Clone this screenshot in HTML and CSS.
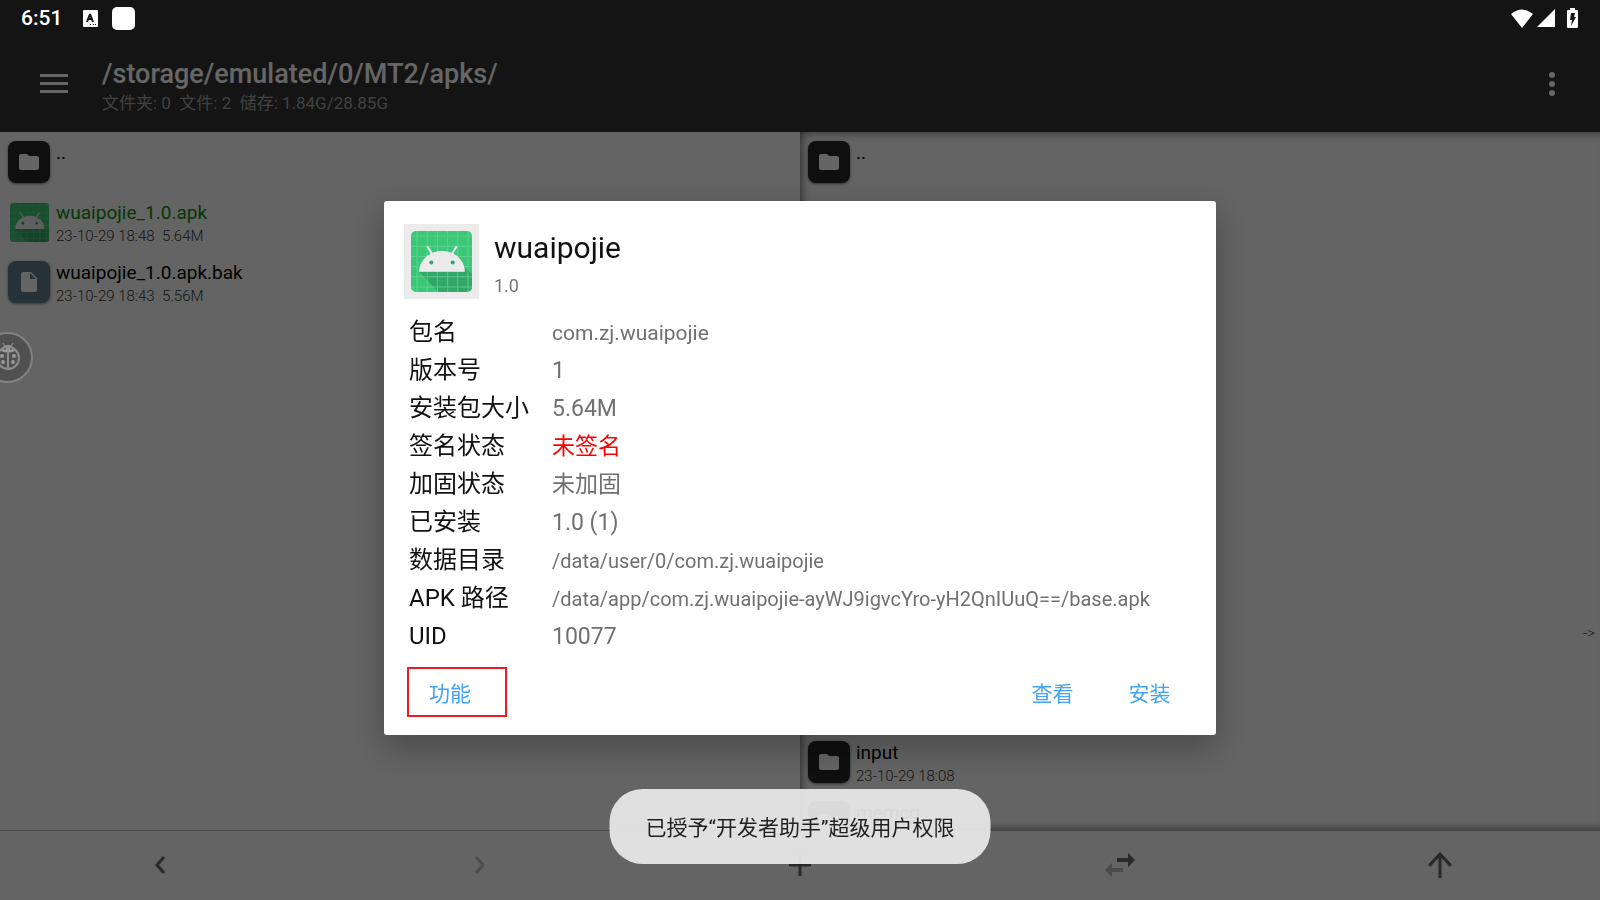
FILE: index.html
```html
<!DOCTYPE html>
<html lang="zh-CN">
<head>
  <meta charset="UTF-8">
  <meta name="viewport" content="width=device-width, initial-scale=1">
  <title>/storage/emulated/0/MT2/apks/</title>
  <link rel="stylesheet" href="styles.css">
</head>
<body>

  <!-- shared icons -->
  <svg class="sprite" aria-hidden="true">
    <symbol id="folder" viewBox="0 0 20 16">
      <path d="M2 0h6l2 2h8a2 2 0 0 1 2 2v10a2 2 0 0 1-2 2H2a2 2 0 0 1-2-2V2a2 2 0 0 1 2-2z"/>
    </symbol>
    <symbol id="file" viewBox="0 0 16 20">
      <path fill-rule="evenodd" d="M2 0h8l6 6v12a2 2 0 0 1-2 2H2a2 2 0 0 1-2-2V2a2 2 0 0 1 2-2zM9 1v6h6z"/>
    </symbol>
    <symbol id="android" viewBox="0 0 60 60">
      <rect width="60" height="60" rx="5" fill="#3ac777"/>
      <path d="M8 40h44l1-4 7 6v13a5 5 0 0 1-5 5H27z" fill="#32a868"/>
      <path d="M6 0v60M16 0v60M26 0v60M36 0v60M46 0v60M56 0v60M0 5h60M0 15h60M0 25h60M0 35h60M0 45h60M0 55h60" stroke="#75da9f" stroke-width="1" opacity=".6"/>
      <path d="M8 40a22 20 0 0 1 45 0z" fill="#ebebeb"/>
      <path d="M16 15l5 8M45 15l-5 8" stroke="#ebebeb" stroke-width="2"/>
      <circle cx="20" cy="31" r="2" fill="#32a868"/>
      <circle cx="41" cy="31" r="2" fill="#32a868"/>
    </symbol>
  </svg>

  <header class="status-bar">
    <span class="clock">6:51</span>
    <svg class="status-input" width="15" height="17" viewBox="0 0 15 17">
      <rect width="15" height="17" rx="1" fill="#fff"/>
      <path d="M4 12L7 4l3 8M5 9h4" fill="none" stroke="#141414" stroke-width="2" stroke-linejoin="bevel"/>
      <path d="M7 14h1v1H7zM10 14h1v1h-1zM12 14h1v1h-1z" fill="#141414"/>
    </svg>
    <span class="status-app"></span>
    <div class="status-right">
      <svg width="22" height="19" viewBox="0 0 22 19" fill="#fff"><path d="M11 19L0 5Q11-4 22 5z"/></svg>
      <svg class="signal" width="18" height="18" viewBox="0 0 18 18" fill="#fff"><path d="M18 0v18H0z"/></svg>
      <svg width="11" height="20" viewBox="0 0 11 20">
        <path d="M3 0h5v2h2a1 1 0 0 1 1 1v16a1 1 0 0 1-1 1H1a1 1 0 0 1-1-1V3a1 1 0 0 1 1-1h2z" fill="#fff"/>
        <path d="M4 5h4L7 9h2l-5 9 1-6H3z" fill="#141414"/>
      </svg>
    </div>
  </header>

  <div class="toolbar">
    <button class="icon-btn" aria-label="菜单">
      <svg width="28" height="20" viewBox="0 0 28 20"><path d="M0 0h28v3H0zM0 8h28v3H0zM0 16h28v3H0z"/></svg>
    </button>
    <div class="path">
      <h1>/storage/emulated/0/MT2/apks/</h1>
      <p>文件夹: 0&nbsp; 文件: 2&nbsp; 储存: 1.84G/28.85G</p>
    </div>
    <button class="icon-btn" aria-label="更多">
      <svg width="6" height="24" viewBox="0 0 6 24"><circle cx="3" cy="3" r="3"/><circle cx="3" cy="12" r="3"/><circle cx="3" cy="21" r="3"/></svg>
    </button>
  </div>

  <main class="panes">
    <section class="pane">
      <div class="row">
        <span class="tile"><svg width="20" height="16"><use href="#folder"/></svg></span>
        <div class="name">..</div>
      </div>
      <div class="row">
        <span class="tile tile-apk"><svg width="39" height="39"><use href="#android"/></svg></span>
        <div>
          <div class="name installed">wuaipojie_1.0.apk</div>
          <div class="meta">23-10-29 18:48&nbsp; 5.64M</div>
        </div>
      </div>
      <div class="row">
        <span class="tile tile-file"><svg width="16" height="20"><use href="#file"/></svg></span>
        <div>
          <div class="name">wuaipojie_1.0.apk.bak</div>
          <div class="meta">23-10-29 18:43&nbsp; 5.56M</div>
        </div>
      </div>
    </section>

    <section class="pane pane-right">
      <div class="row">
        <span class="tile"><svg width="20" height="16"><use href="#folder"/></svg></span>
        <div class="name">..</div>
      </div>
      <div class="row row-link">
        <span class="meta">-&gt;</span>
      </div>
      <div class="row row-input">
        <span class="tile"><svg width="20" height="16"><use href="#folder"/></svg></span>
        <div>
          <div class="name">input</div>
          <div class="meta">23-10-29 18:08</div>
        </div>
      </div>
      <div class="row row-memcg">
        <span class="tile"><svg width="20" height="16"><use href="#folder"/></svg></span>
        <div class="name">memcg</div>
      </div>
    </section>
  </main>

  <nav class="bottom-bar">
    <button aria-label="后退">
      <svg width="12" height="20" viewBox="0 0 12 20"><path d="M10 2L3 10l7 8" fill="none" stroke="#666" stroke-width="3"/></svg>
    </button>
    <button aria-label="前进" disabled>
      <svg width="12" height="20" viewBox="0 0 12 20"><path d="M2 2l7 8-7 8" fill="none" stroke="#bbb" stroke-width="3"/></svg>
    </button>
    <button aria-label="新建">
      <svg width="22" height="22" viewBox="0 0 22 22"><path d="M11 0v22M0 11h22" stroke="#666" stroke-width="3"/></svg>
    </button>
    <button aria-label="同步">
      <svg width="30" height="24" viewBox="0 0 30 24">
        <path d="M12 5h11V0l7 7-7 7V9H12z" fill="#666"/>
        <path d="M18 15H7v-5l-7 7 7 7v-5h11z" fill="#bbb"/>
      </svg>
    </button>
    <button aria-label="上级">
      <svg width="24" height="26" viewBox="0 0 24 26"><path d="M12 26V2M1 14L12 2l11 12" fill="none" stroke="#666" stroke-width="3"/></svg>
    </button>
  </nav>

  <div class="scrim">
    <div class="dialog" role="dialog" aria-labelledby="app-name">
      <div class="app-head">
        <span class="app-icon"><svg width="61" height="61"><use href="#android"/></svg></span>
        <div>
          <h2 id="app-name">wuaipojie</h2>
          <p>1.0</p>
        </div>
      </div>

      <table class="info">
        <tr><th>包名</th><td class="mid">com.zj.wuaipojie</td></tr>
        <tr><th>版本号</th><td>1</td></tr>
        <tr><th>安装包大小</th><td>5.64M</td></tr>
        <tr><th>签名状态</th><td class="warn">未签名</td></tr>
        <tr><th>加固状态</th><td>未加固</td></tr>
        <tr><th>已安装</th><td>1.0 (1)</td></tr>
        <tr><th>数据目录</th><td class="small">/data/user/0/com.zj.wuaipojie</td></tr>
        <tr><th>APK 路径</th><td class="small">/data/app/com.zj.wuaipojie-ayWJ9igvcYro-yH2QnIUuQ==/base.apk</td></tr>
        <tr><th>UID</th><td>10077</td></tr>
      </table>

      <div class="actions">
        <button class="marked">功能</button>
        <button>查看</button>
        <button>安装</button>
      </div>
    </div>
  </div>

  <button class="bug" aria-label="开发者助手">
    <svg width="24" height="28" viewBox="0 0 24 28">
      <path d="M7 1l3 5M17 1l-3 5" stroke="#999" stroke-width="1" fill="none"/>
      <path d="M5 9a7 6 0 0 1 14 0q-7 3-14 0z" fill="#999"/>
      <circle cx="12" cy="16" r="11" fill="none" stroke="#8c8c8c" stroke-width="2"/>
      <path d="M12 9v18" stroke="#8c8c8c" stroke-width="2"/>
      <g fill="#999"><circle cx="7" cy="20" r="2"/><circle cx="17" cy="20" r="2"/><circle cx="6" cy="14" r="2"/><circle cx="18" cy="14" r="2"/></g>
      <g fill="#505050"><circle cx="9" cy="7" r="1"/><circle cx="15" cy="7" r="1"/></g>
    </svg>
  </button>

  <div class="toast" role="status">已授予“开发者助手”超级用户权限</div>

</body>
</html>
```
FILE: styles.css
```css
* {
  box-sizing: border-box;
}

body {
  margin: 0;
  height: 100vh;
  display: flex;
  flex-direction: column;
  overflow: hidden;
  background: #fafafa;
  color: #000;
  font-family: Roboto, "Noto Sans CJK SC", sans-serif;
}

h1, h2, p {
  margin: 0;
  font-weight: 400;
}

svg {
  display: block;
}

button {
  border: none;
  background: none;
  padding: 0;
  font-family: inherit;
  cursor: pointer;
}

.sprite {
  position: absolute;
  width: 0;
  height: 0;
}

/* status bar stays above the scrim */
.status-bar {
  position: relative;
  z-index: 2;
  flex: none;
  height: 36px;
  padding: 0 22px 0 21px;
  display: flex;
  align-items: center;
  background: #141414;
  color: #fff;
}

.clock {
  font-size: 21px;
  font-weight: 500;
  margin-right: 21px;
}

.status-app {
  width: 23px;
  height: 23px;
  margin-left: 14px;
  border-radius: 5px;
  background: #fff;
}

.status-right {
  display: flex;
  align-items: center;
  margin-left: auto;
}

.signal {
  margin: 0 12px 0 4px;
}

/* toolbar */
.toolbar {
  flex: none;
  height: 96px;
  padding: 0 24px 0 30px;
  display: flex;
  align-items: center;
  background: #323232;
}

.icon-btn {
  width: 48px;
  height: 48px;
  display: flex;
  align-items: center;
  justify-content: center;
  fill: #fff;
}

.path {
  flex: 1;
  padding: 6px 0 0 24px;
}

.path h1 {
  font-size: 27px;
  line-height: 32px;
  font-weight: 500;
  color: #fff;
}

.path p {
  font-size: 17px;
  line-height: 26px;
  color: #a5a5a5;
}

/* file panes */
.panes {
  flex: 1;
  min-height: 0;
  display: grid;
  grid-template-columns: 1fr 1fr;
}

.pane {
  min-height: 0;
  overflow: hidden;
  display: grid;
  grid-auto-rows: 60px;
  align-content: start;
}

.pane-right {
  box-shadow: inset 10px 0 8px -8px rgba(0,0,0,0.5), inset 0 10px 8px -8px rgba(0,0,0,0.4), inset 0 -10px 8px -8px rgba(0,0,0,0.4);
}

.row {
  display: flex;
  padding: 9px 5px 0 8px;
}

.row-link {
  grid-row: 9;
  justify-content: flex-end;
}

.row-input {
  grid-row: 11;
}

.row-memcg {
  grid-row: 12;
}

.tile {
  flex: none;
  width: 42px;
  height: 42px;
  margin-right: 6px;
  display: flex;
  align-items: center;
  justify-content: center;
  border-radius: 8px;
  background: #262626;
  fill: #fafafa;
  box-shadow: 0 1px 3px rgba(0,0,0,0.5);
}

.tile-apk {
  background: none;
  box-shadow: none;
}

.tile-file {
  background: #607d8b;
}

.name {
  font-size: 19px;
  line-height: 23px;
}

.installed {
  color: #0a8a0a;
}

.meta {
  font-size: 15px;
  line-height: 24px;
  font-weight: 300;
  color: #383838;
}

/* bottom bar */
.bottom-bar {
  flex: none;
  height: 70px;
  padding-bottom: 2px;
  display: grid;
  grid-template-columns: repeat(5, 1fr);
  border-top: 1px solid #b0b0b0;
}

.bottom-bar button {
  display: flex;
  align-items: center;
  justify-content: center;
}

/* dialog */
.scrim {
  position: fixed;
  inset: 0;
  z-index: 1;
  padding-top: 36px;
  display: flex;
  align-items: center;
  justify-content: center;
  background: rgba(0,0,0,0.6);
}

.dialog {
  width: 52%;
  padding: 23px 18px 18px 20px;
  border-radius: 3px;
  background: #fff;
  box-shadow: 0 12px 36px rgba(0,0,0,0.3);
}

.app-head {
  display: flex;
  margin-bottom: 15px;
}

.app-icon {
  width: 75px;
  height: 75px;
  margin-right: 15px;
  display: flex;
  align-items: center;
  justify-content: center;
  background: #ebebeb;
}

.app-head h2 {
  font-size: 30px;
  line-height: 48px;
  color: #111;
}

.app-head p {
  font-size: 18px;
  line-height: 27px;
  color: #757575;
}

.info {
  width: 100%;
  border-collapse: collapse;
}

.info th, .info td {
  height: 38px;
  padding: 0;
  font-size: 24px;
  line-height: 36px;
  font-weight: 400;
  text-align: left;
  vertical-align: baseline;
}

.info th {
  width: 148px;
  padding-left: 5px;
  color: #111;
}

.info td {
  font-size: 23px;
  color: #707070;
}

.info td.mid {
  font-size: 21px;
}

.info td.small {
  font-size: 20px;
}

.info td.warn {
  color: #f00;
}

.actions {
  display: flex;
  margin-top: 11px;
}

.actions button {
  width: 97px;
  height: 50px;
  font-size: 21px;
  color: #42a5f5;
}

.actions .marked {
  width: 100px;
  margin: 0 auto 0 3px;
  padding-left: 20px;
  border: 2px solid #ed1c24;
  text-align: left;
}

/* floating helper button, half off the left edge */
.bug {
  position: fixed;
  left: -18px;
  top: 332px;
  z-index: 2;
  width: 51px;
  height: 51px;
  padding-bottom: 3px;
  display: flex;
  align-items: center;
  justify-content: center;
  border: 2px solid #828282;
  border-radius: 50%;
  background: #505050;
}

.toast {
  position: fixed;
  left: 50%;
  bottom: 36px;
  z-index: 3;
  transform: translateX(-50%);
  padding: 3px 36px 0;
  border-radius: 33px;
  background: rgba(234,234,234,0.93);
  color: #1f1f1f;
  font-size: 21px;
  line-height: 72px;
  white-space: nowrap;
}
```
